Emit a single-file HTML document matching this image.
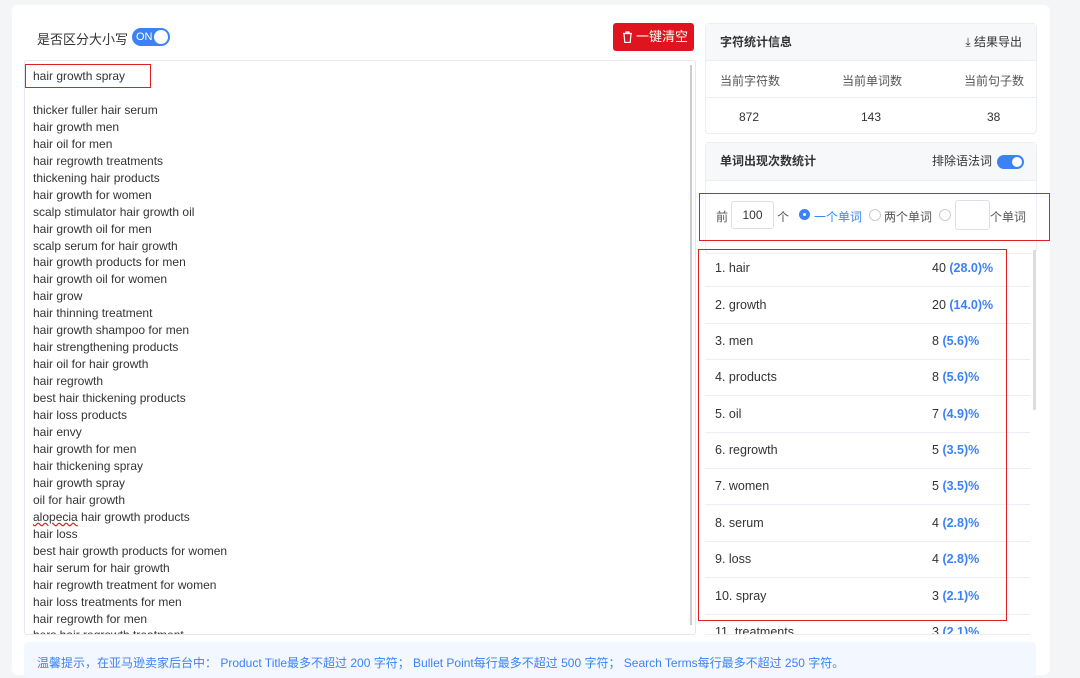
<html><head><style>
body{margin:0;width:1080px;height:675px;background:#f4f5f7;font-family:"Liberation Sans","Noto Sans CJK SC",sans-serif;position:relative;overflow:hidden;color:#333}
.a{position:absolute}
.card{left:12px;top:5px;width:1038px;height:670px;background:#fff;border-radius:6px}
.ta{left:24px;top:60px;width:670px;height:573px;border:1px solid #e4e7ed;border-radius:3px;overflow:hidden;font-size:12px;line-height:16.95px}
.ta div{padding-left:8px;white-space:nowrap}
.box{border:1px solid #ebeef5;border-radius:4px;background:#fff}
.hd{background:#f7f8fa;font-weight:bold;font-size:12px}
.row{left:705px;width:325px;height:36px;border-bottom:1px solid #ebeef5;font-size:12.5px}
.row span{position:absolute;top:11px}
.b{color:#3b82f6}
.red{border:1.5px solid #e02020}
.rad{position:absolute;top:209px;width:10px;height:10px;border-radius:6px;border:1px solid #ccc}
</style></head><body>
<div class="a card"></div>
<div class="a" style="left:37px;top:29px;font-size:13px">是否区分大小写</div>
<div class="a" style="left:132px;top:28px;width:38px;height:18px;border-radius:9px;background:#3b82f6;color:#fff;font-size:11px"><span style="position:absolute;left:4px;top:3px">ON</span><div class="a" style="right:2px;top:2px;width:14px;height:14px;border-radius:7px;background:#fff"></div></div>
<div class="a" style="left:613px;top:23px;width:81px;height:28px;background:#e0141e;border-radius:3px;color:#fff;font-size:13px;line-height:28px"><svg class="a" style="left:9px;top:8px" width="11" height="12" viewBox="0 0 11 12" fill="none" stroke="#fff" stroke-width="1.2"><path d="M1 2.5h9M4 2.5V1h3v1.5M2 2.5l.8 9h5.4l.8-9"/></svg><span class="a" style="left:23px;top:0">一键清空</span></div>
<div class="a ta">
<div style="margin-top:7px">hair growth spray</div><div>&nbsp;</div>
<div>thicker fuller hair serum</div><div>hair growth men</div><div>hair oil for men</div><div>hair regrowth treatments</div><div>thickening hair products</div><div>hair growth for women</div><div>scalp stimulator hair growth oil</div><div>hair growth oil for men</div><div>scalp serum for hair growth</div><div>hair growth products for men</div><div>hair growth oil for women</div><div>hair grow</div><div>hair thinning treatment</div><div>hair growth shampoo for men</div><div>hair strengthening products</div><div>hair oil for hair growth</div><div>hair regrowth</div><div>best hair thickening products</div><div>hair loss products</div><div>hair envy</div><div>hair growth for men</div><div>hair thickening spray</div><div>hair growth spray</div><div>oil for hair growth</div><div><u style="text-decoration:underline wavy #e02020">alopecia</u> hair growth products</div><div>hair loss</div><div>best hair growth products for women</div><div>hair serum for hair growth</div><div>hair regrowth treatment for women</div><div>hair loss treatments for men</div><div>hair regrowth for men</div><div>hers hair regrowth treatment</div>
</div>
<div class="a" style="left:690px;top:65px;width:2px;height:560px;background:#ccc"></div>
<div class="a red" style="left:25px;top:64px;width:124px;height:22px"></div>
<div class="a box" style="left:705px;top:23px;width:330px;height:109px">
<div class="hd" style="height:36px;line-height:36px;padding-left:14px;border-bottom:1px solid #ebeef5">字符统计信息<span style="position:absolute;right:14px;font-weight:normal">⤓ 结果导出</span></div>
<div style="font-size:12px;color:#555;height:36px;border-bottom:1px solid #ebeef5;position:relative"><span class="a" style="left:14px;top:11px">当前字符数</span><span class="a" style="left:136px;top:11px">当前单词数</span><span class="a" style="left:258px;top:11px">当前句子数</span></div>
<div style="font-size:12px;position:relative"><span class="a" style="left:33px;top:12px">872</span><span class="a" style="left:155px;top:12px">143</span><span class="a" style="left:281px;top:12px">38</span></div>
</div>
<div class="a box" style="left:705px;top:142px;width:330px;height:110px">
<div class="hd" style="height:37px;line-height:37px;padding-left:14px;border-bottom:1px solid #ebeef5">单词出现次数统计<span style="position:absolute;right:44px;font-weight:normal">排除语法词</span><div class="a" style="right:12px;top:12px;width:27px;height:14px;border-radius:7px;background:#3b82f6"><div class="a" style="right:2px;top:2px;width:10px;height:10px;border-radius:5px;background:#fff"></div></div></div>
</div>
<div class="a" style="left:716px;top:208px;font-size:12px;color:#555">前</div>
<div class="a" style="left:731px;top:201px;width:41px;height:26px;border:1px solid #dcdfe6;border-radius:3px;font-size:12px;line-height:26px;text-align:center">100</div>
<div class="a" style="left:777px;top:208px;font-size:12px;color:#555">个</div>
<div class="a" style="left:799px;top:209px;width:11px;height:11px;border-radius:6px;background:#3b82f6"><div class="a" style="left:4px;top:4px;width:3px;height:3px;background:#fff;border-radius:2px"></div></div>
<div class="a b" style="left:814px;top:208px;font-size:12px">一个单词</div>
<div class="rad" style="left:869px"></div>
<div class="a" style="left:884px;top:208px;font-size:12px;color:#555">两个单词</div>
<div class="rad" style="left:939px"></div>
<div class="a" style="left:955px;top:200px;width:33px;height:28px;border:1px solid #dcdfe6;border-radius:3px"></div>
<div class="a" style="left:990px;top:208px;font-size:12px;color:#555">个单词</div>
<div class="a red" style="left:699px;top:193px;width:349px;height:46px"></div>
<div class="a row" style="top:250px"><span style="left:10px">1. hair</span><span style="left:227px">40 <b class="b">(28.0)%</b></span></div>
<div class="a row" style="top:287px"><span style="left:10px">2. growth</span><span style="left:227px">20 <b class="b">(14.0)%</b></span></div>
<div class="a row" style="top:323px"><span style="left:10px">3. men</span><span style="left:227px">8 <b class="b">(5.6)%</b></span></div>
<div class="a row" style="top:359px"><span style="left:10px">4. products</span><span style="left:227px">8 <b class="b">(5.6)%</b></span></div>
<div class="a row" style="top:396px"><span style="left:10px">5. oil</span><span style="left:227px">7 <b class="b">(4.9)%</b></span></div>
<div class="a row" style="top:432px"><span style="left:10px">6. regrowth</span><span style="left:227px">5 <b class="b">(3.5)%</b></span></div>
<div class="a row" style="top:468px"><span style="left:10px">7. women</span><span style="left:227px">5 <b class="b">(3.5)%</b></span></div>
<div class="a row" style="top:505px"><span style="left:10px">8. serum</span><span style="left:227px">4 <b class="b">(2.8)%</b></span></div>
<div class="a row" style="top:541px"><span style="left:10px">9. loss</span><span style="left:227px">4 <b class="b">(2.8)%</b></span></div>
<div class="a row" style="top:578px"><span style="left:10px">10. spray</span><span style="left:227px">3 <b class="b">(2.1)%</b></span></div>
<div class="a row" style="top:614px;height:20px;overflow:hidden"><span style="left:10px">11. treatments</span><span style="left:227px">3 <b class="b">(2.1)%</b></span></div>
<div class="a" style="left:1033px;top:250px;width:3px;height:160px;background:#ddd"></div>
<div class="a red" style="left:698px;top:249px;width:307px;height:370px"></div>
<div class="a" style="left:24px;top:642px;width:1012px;height:36px;background:#f3f7ff;border-radius:4px"></div>
<div class="a" style="left:37px;top:654px;font-size:12px;color:#3b82f6">温馨提示，在亚马逊卖家后台中： Product Title最多不超过 200 字符； Bullet Point每行最多不超过 500 字符； Search Terms每行最多不超过 250 字符。</div>
</body></html>
